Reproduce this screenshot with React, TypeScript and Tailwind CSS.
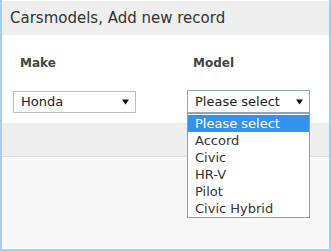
import React from "react";

const Arrow = () => (
  <svg width="7" height="6" viewBox="0 0 7 6" className="block">
    <path d="M0 0.5 L7 0.5 L3.5 5.5 Z" fill="#111" />
  </svg>
);

export default function App() {
  const items = ["Please select", "Accord", "Civic", "HR-V", "Pilot", "Civic Hybrid"];
  return (
    <div
      className="relative w-[331px] h-[251px] bg-white overflow-hidden"
      style={{ fontFamily: '"DejaVu Sans", Verdana, sans-serif' }}
    >
      <div className="w-[331px] h-[251px] pt-px border-l-2 border-r-2 border-b-2 border-[#a3cdf5] flex flex-col">
        <div className="h-[34px] bg-[#eeeeee] pl-[8px] text-[15px] leading-[34px] text-[#333]">
          Carsmodels, Add new record
        </div>
        <div className="h-[88px] bg-white pt-[20px] pl-[11px] flex">
          <div className="w-[174px] flex flex-col">
            <div className="pl-[7px] text-[12px] leading-[16px] font-bold text-[#444]">Make</div>
            <div className="mt-[20px] w-[123px] h-[22px] border border-[#bcbcbc] bg-white flex items-center justify-between pl-[7px] pr-[6px] text-[13px] text-[#222]">
              <span>Honda</span>
              <Arrow />
            </div>
          </div>
          <div className="flex flex-col">
            <div className="pl-[6px] text-[12px] leading-[16px] font-bold text-[#444]">Model</div>
            <div className="mt-[19px] w-[123px] h-[23px] border border-[#8fa6c6] bg-white flex items-center justify-between pl-[7px] pr-[6px] text-[13px] text-[#222]">
              <span>Please select</span>
              <Arrow />
            </div>
          </div>
        </div>
        <div className="h-[34px] bg-[#eeeeee] border-b border-[#dcdcdc]" />
        <div className="flex-1 bg-[#f7f7f7] border-b border-white" />
      </div>
      <div className="absolute left-[187px] top-[113px] w-[123px] border border-[#8a9fb8] bg-white pt-px pb-0 text-[13px]">
        {items.map((it, i) => (
          <div
            key={it}
            className={
              "h-[17px] leading-[17px] pl-[7px] " +
              (i === 0 ? "bg-[#3492ee] text-white" : "text-[#333]")
            }
          >
            {it}
          </div>
        ))}
      </div>
    </div>
  );
}
